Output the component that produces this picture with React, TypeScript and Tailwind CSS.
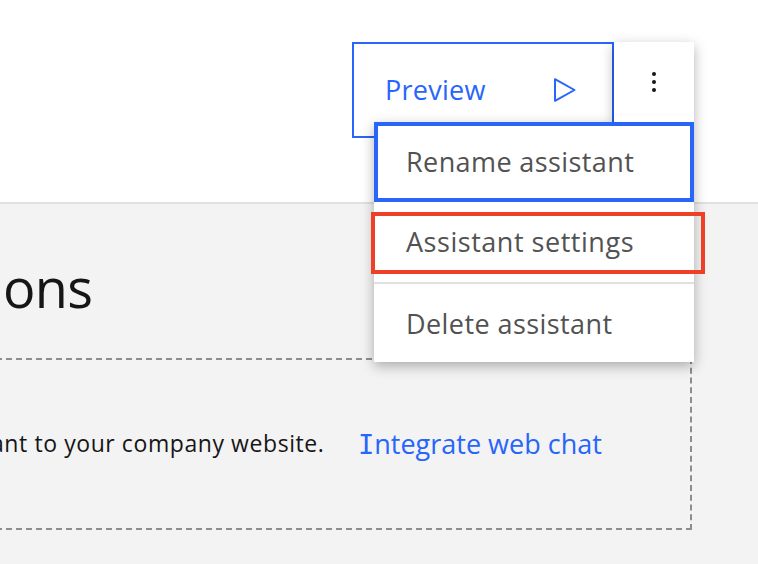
const itemText = "flex items-center px-8 text-[27px] text-[#525252] whitespace-nowrap";

function ActionsMenu() {
  return (
    <div className="absolute left-[22px] top-20 z-10 flex h-60 w-80 flex-col bg-white shadow-[0_4px_12px_rgba(0,0,0,0.3)]">
      <div className="absolute -top-1.5 right-0 h-1.5 w-20 bg-white" />
      <div className={itemText + " h-20 outline-4 -outline-offset-4 outline-[#2765fb]"}>
        <span className="tracking-[0.4px]">Rename assistant</span>
      </div>
      <div className={itemText + " h-20"}>
        <span className="tracking-[0.53px]">Assistant settings</span>
      </div>
      <div className={itemText + " h-20 border-t-2 border-[#e0e0e0] pt-0.5"}>
        <span className="tracking-[0.42px]">Delete assistant</span>
      </div>
      <div className="absolute -left-[3px] top-[90px] h-[62px] w-[334px] border-4 border-[#ee4027]" />
    </div>
  );
}

export default function App() {
  return (
    <div className="h-[564px] w-[758px] overflow-hidden bg-[#f3f3f3] font-['Open_Sans','Noto_Sans',sans-serif] text-[#161616]">
      <header className="flex h-[204px] justify-end border-b-2 border-[#e0e0e0] bg-white pr-16 pt-[42px]">
        <div className="relative flex h-24 items-start">
          <button className="flex h-24 w-[262px] items-center justify-between border-2 border-[#2765fb] bg-white pl-[31px] pr-8 text-[27px] text-[#2765fb]">
            <span className="tracking-[0.25px]">Preview</span>
            <svg className="h-8 w-8" viewBox="0 0 32 32" fill="none" stroke="#2765fb" strokeWidth="2">
              <path d="M7 5.2 26.5 16 7 26.8Z" strokeLinejoin="round" />
            </svg>
          </button>
          <button className="flex h-20 w-20 items-center justify-center bg-white shadow-[0_4px_12px_rgba(0,0,0,0.3)]">
            <svg className="h-8 w-8" viewBox="0 0 32 32" fill="#161616">
              <circle cx="16" cy="8" r="2" />
              <circle cx="16" cy="16" r="2" />
              <circle cx="16" cy="24" r="2" />
            </svg>
          </button>
          <ActionsMenu />
        </div>
      </header>
      <main>
        <h1 className="flex h-[154px] items-center pl-[3px] pt-3 text-[54px] tracking-[-0.7px]">ons</h1>
        <section className="-ml-[34px] flex h-[172px] w-[726px] items-center border-2 border-dashed border-[#8d8d8d] pl-[23px]">
          <p className="w-[367px] whitespace-nowrap pb-0.5 text-[23px] tracking-[0.58px]">ant to your company website.</p>
          <a className="whitespace-nowrap pt-0.5 text-[27px] text-[#2765fb]">
            <span className="font-['DejaVu_Sans_Mono',monospace]">I</span>ntegrate web chat
          </a>
        </section>
      </main>
    </div>
  );
}
